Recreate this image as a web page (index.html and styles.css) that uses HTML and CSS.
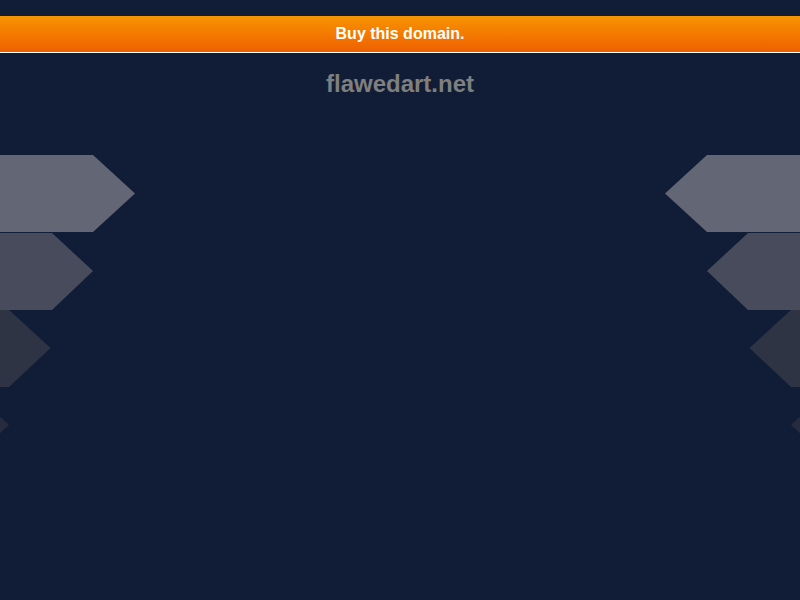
FILE: index.html
```html
<!DOCTYPE html>
<html>
<head>
<meta charset="utf-8">
<link rel="stylesheet" href="styles.css">
</head>
<body>
<div class="page">
  <div class="bar"><a class="buy" href="#">Buy this domain.</a></div>
  <h1 class="domain">flawedart.net</h1>
  <svg class="deco deco-left" width="140" height="320" viewBox="0 0 140 320">
    <polygon points="0,0 93,0 135,38.5 93,77 0,77" fill="#636775"/>
    <polygon points="0,78 52,78 93,116 52,155 0,155" fill="#484b5b"/>
    <polygon points="0,155 9,155 50.5,193 9,232 0,232" fill="#2f3445"/>
    <polygon points="0,232 -33,232 9,270 -33,309 0,309" fill="#262b3f"/>
  </svg>
  <svg class="deco deco-right" width="140" height="320" viewBox="0 0 140 320">
    <polygon points="140,0 47,0 5,38.5 47,77 140,77" fill="#636775"/>
    <polygon points="140,78 88,78 47,116 88,155 140,155" fill="#484b5b"/>
    <polygon points="140,155 131,155 89.5,193 131,232 140,232" fill="#2f3445"/>
    <polygon points="140,232 173,232 131,270 173,309 140,309" fill="#262b3f"/>
  </svg>
</div>
</body>
</html>
```

FILE: styles.css
```css
html, body {
  margin: 0;
  padding: 0;
  background: #111d37;
  font-family: "Liberation Sans", Arial, sans-serif;
}
.page {
  position: relative;
  width: 800px;
  height: 600px;
  overflow: hidden;
  padding-top: 16px;
  box-sizing: border-box;
}
.bar {
  height: 36px;
  background: linear-gradient(to bottom, #f89400, #ef6000);
  border-bottom: 1px solid #ffffff;
  display: flex;
  align-items: center;
  justify-content: center;
}
.buy {
  color: #ffffff;
  font-weight: bold;
  font-size: 16px;
  text-decoration: none;
}
.domain {
  margin: 17px 0 0;
  text-align: center;
  font-size: 24px;
  font-weight: bold;
  color: #7f7f7f;
  line-height: 28px;
}
.deco {
  position: absolute;
  top: 155px;
}
.deco-left { left: 0; }
.deco-right { right: 0; }
```
